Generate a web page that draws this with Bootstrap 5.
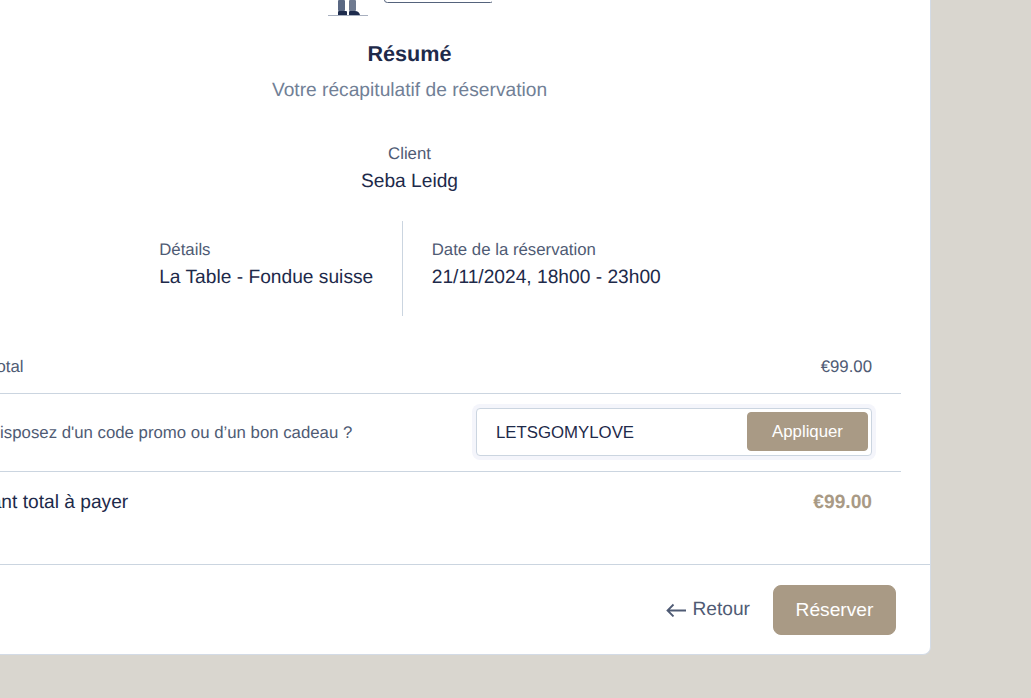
<!DOCTYPE html>
<html lang="fr">
<head>
<meta charset="utf-8">
<title>Résumé</title>
<link href="https://cdn.jsdelivr.net/npm/bootstrap@5.3.0/dist/css/bootstrap.min.css" rel="stylesheet">
<style>
html, body { height: 100%; overflow: hidden; }
body { background: #d9d6cf; font-family: "Liberation Sans", Arial, sans-serif; color: #1e2a4a; text-rendering: geometricPrecision; }
.sheet { width: 1041px; margin: -24px 0 0 -110px; border: 0; border-right: 1px solid #d3dbe6; border-bottom: 1px solid #d3dbe6; border-radius: 8px; --bs-card-bg: #fff; }
.sheet-body { padding: 24px 29px 0; }
.art { display: block; margin: 0 auto; width: 164px; height: 16px; }
.intro { padding-right: 1px; }
.title { font-size: 21.6px; font-weight: 700; line-height: 28px; margin: 24px 0 0; color: #1e2a4a; }
.subtitle { font-size: 19.2px; line-height: 28.8px; margin: 8.6px 0 0; color: #718096; }
.meta-label { font-size: 16.8px; line-height: 25.2px; color: #4f5b74; }
.meta-value { font-size: 19.2px; line-height: 28.8px; margin-top: 1px; color: #1e2a4a; }
.client { margin-top: 36px; }
.details { margin-top: 24.6px; }
.detail-cell { padding: 16px 29px; height: 95px; }
.detail-cell .meta-value { margin-top: 2px; }
.detail-cell + .detail-cell { border-left: 1px solid #cbd5e0; padding-left: 28.5px; }
.line-row { padding: 0 29px; color: #4f5b74; font-size: 16.8px; border-bottom: 1px solid #cbd5e0; }
.row-sub { height: 78px; padding-top: 38px; line-height: 25.2px; align-items: flex-start; }
.row-promo { height: 78px; }
.promo-label { margin-left: 40px; }
.row-total { height: 92px; border-bottom: 0; padding-bottom: 30px; font-size: 19.2px; color: #1e2a4a; }
.total-amt { font-weight: 700; color: #a99a85; }
.promo-box { width: 396px; height: 48px; border: 1px solid #cbd5e0; border-radius: 4px; box-shadow: 0 0 0 4px #f4f5fb; padding: 3px; background: #fff; }
.promo-input { border: 0; padding: 0 0 0 16px; font-size: 16.8px; color: #1e2a4a; background: transparent; flex: 1; min-width: 0; box-shadow: none !important; border-radius: 0; }
.btn-sand { --bs-btn-bg: #a99a85; --bs-btn-border-color: #a99a85; --bs-btn-color: #fff; --bs-btn-hover-bg: #a99a85; --bs-btn-hover-color: #fff; }
.btn-apply { width: 121px; height: 39px; padding: 0; font-size: 16.8px; border-radius: 4px; }
.foot { height: 90px; padding: 0 34px 0 0; border-top: 1px solid #cbd5e0; background: transparent; }
.back-link { font-size: 19.2px; color: #4f5b74; text-decoration: none; gap: 6px; margin: 1px 23px 0 0; }
.btn-book { width: 123px; height: 50px; padding: 0; margin-top: 1px; font-size: 19.2px; border-radius: 8px; }
</style>
</head>
<body>
<div class="card sheet">
  <div class="sheet-body">
    <svg class="art" viewBox="0 0 164 16" aria-hidden="true">
      <rect x="10" y="0" width="7" height="11" rx="1" fill="#5a6883"/>
      <rect x="21" y="0" width="7" height="11" rx="1" fill="#6f7a90"/>
      <path d="M10 15v-3q0-1 1-1h7q1 0 1 1v3zM21 15v-3q0-1 1-1h5q4 0 5 4z" fill="#1e2c4d"/>
      <rect x="0" y="15" width="40" height="1" fill="#a8b0bf"/>
      <path d="M56.500 0q0 2.500 3 2.500h103q2.500 0 2.500-2.500" fill="none" stroke="#55637c" stroke-width="1"/>
    </svg>
    <div class="text-center intro">
      <h1 class="title">Résumé</h1>
      <p class="subtitle">Votre récapitulatif de réservation</p>
      <div class="client">
        <div class="meta-label">Client</div>
        <div class="meta-value">Seba Leidg</div>
      </div>
    </div>
    <div class="d-flex justify-content-center details">
      <div class="detail-cell">
        <div class="meta-label">Détails</div>
        <div class="meta-value">La Table - Fondue suisse</div>
      </div>
      <div class="detail-cell">
        <div class="meta-label">Date de la réservation</div>
        <div class="meta-value">21/11/2024, 18h00 - 23h00</div>
      </div>
    </div>
    <div class="line-row row-sub d-flex justify-content-between">
      <span>Sous-total</span><span>€99.00</span>
    </div>
    <div class="line-row row-promo d-flex justify-content-between align-items-center">
      <span class="promo-label">Disposez d'un code promo ou d’un bon cadeau ?</span>
      <div class="promo-box d-flex">
        <input class="form-control promo-input" type="text" value="LETSGOMYLOVE" aria-label="Code promo">
        <button class="btn btn-sand btn-apply" type="button">Appliquer</button>
      </div>
    </div>
    <div class="line-row row-total d-flex justify-content-between align-items-center">
      <span>Montant total à payer</span><span class="total-amt">€99.00</span>
    </div>
  </div>
  <div class="card-footer foot d-flex justify-content-end align-items-center">
    <a class="back-link d-flex align-items-center" href="#">
      <svg width="20" height="14" viewBox="0 0 20 14" fill="none" stroke="#4f5b74" stroke-width="1.800" aria-hidden="true"><path d="M20 7.500H1.500M7.500 1.500l-6 6 6 6"/></svg>
      Retour
    </a>
    <button class="btn btn-sand btn-book" type="button">Réserver</button>
  </div>
</div>
</body>
</html>
